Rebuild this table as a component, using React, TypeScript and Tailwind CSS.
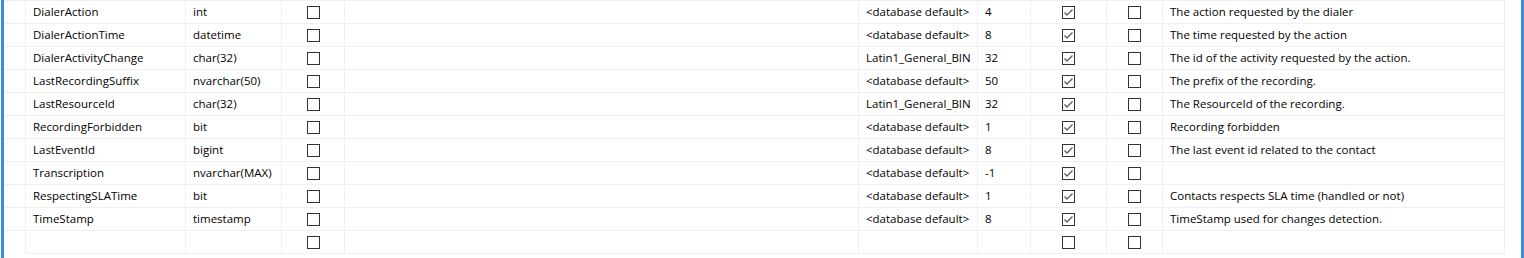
const rows = [
  { name: "DialerAction", type: "int", collation: "<database default>", size: "4", desc: "The action requested by the dialer" },
  { name: "DialerActionTime", type: "datetime", collation: "<database default>", size: "8", desc: "The time requested by the action" },
  { name: "DialerActivityChange", type: "char(32)", collation: "Latin1_General_BIN", size: "32", desc: "The id of the activity requested by the action." },
  { name: "LastRecordingSuffix", type: "nvarchar(50)", collation: "<database default>", size: "50", desc: "The prefix of the recording." },
  { name: "LastResourceId", type: "char(32)", collation: "Latin1_General_BIN", size: "32", desc: "The ResourceId of the recording." },
  { name: "RecordingForbidden", type: "bit", collation: "<database default>", size: "1", desc: "Recording forbidden" },
  { name: "LastEventId", type: "bigint", collation: "<database default>", size: "8", desc: "The last event id related to the contact" },
  { name: "Transcription", type: "nvarchar(MAX)", collation: "<database default>", size: "-1", desc: "" },
  { name: "RespectingSLATime", type: "bit", collation: "<database default>", size: "1", desc: "Contacts respects SLA time (handled or not)" },
  { name: "TimeStamp", type: "timestamp", collation: "<database default>", size: "8", desc: "TimeStamp used for changes detection." },
];

const Box = ({ checked }: { checked?: boolean }) => (
  <div className="w-[13px] h-[13px] border border-[#333333] bg-white flex items-center justify-center">
    {checked && (
      <svg width="11" height="11" viewBox="0 0 11 11">
        <path d="M1.5 5.5 L4 8 L9.5 2.5" fill="none" stroke="#5f5f5f" strokeWidth="1.4" />
      </svg>
    )}
  </div>
);

const cell = "h-[23px] border-t border-l border-[#f0f0f0] flex items-center pl-[7px] whitespace-nowrap overflow-hidden";
const boxCell = "h-[23px] border-t border-l border-[#f0f0f0] flex items-center justify-center";

export default function App() {
  const all = [...rows, null];
  return (
    <div className="w-[1524px] h-[258px] bg-white flex text-[11.5px] text-black" style={{ fontFamily: '"Segoe UI", "Open Sans", sans-serif' }}>
      <div className="w-[1px]" />
      <div className="w-[3px] h-[258px] bg-[#3b8ae6]" />
      <div className="w-[1501px] flex flex-col">
        {all.map((r, i) => (
          <div key={i} className="flex">
            <div className="w-[21px] h-[23px] border-t border-[#f0f0f0]" />
            <div className={`${cell} w-[160px]`}>{r?.name}</div>
            <div className={`${cell} w-[96px]`}>{r?.type}</div>
            <div className={`${boxCell} w-[63px]`}><Box /></div>
            <div className={`${cell} w-[514px]`} />
            <div className={`${cell} w-[119px]`}>{r?.collation}</div>
            <div className={`${cell} w-[53px]`}>{r?.size}</div>
            <div className={`${boxCell} w-[76px]`}><Box checked={!!r} /></div>
            <div className={`${boxCell} w-[56px]`}><Box /></div>
            <div className={`${cell} w-[343px] border-r`}>{r?.desc}</div>
          </div>
        ))}
        <div className="flex">
          <div className="w-[21px]" />
          <div className="w-[1480px] border-t border-[#f0f0f0]" />
        </div>
      </div>
      <div className="w-[16px]" />
      <div className="w-[3px] h-[258px] bg-[#3b8ae6]" />
    </div>
  );
}
